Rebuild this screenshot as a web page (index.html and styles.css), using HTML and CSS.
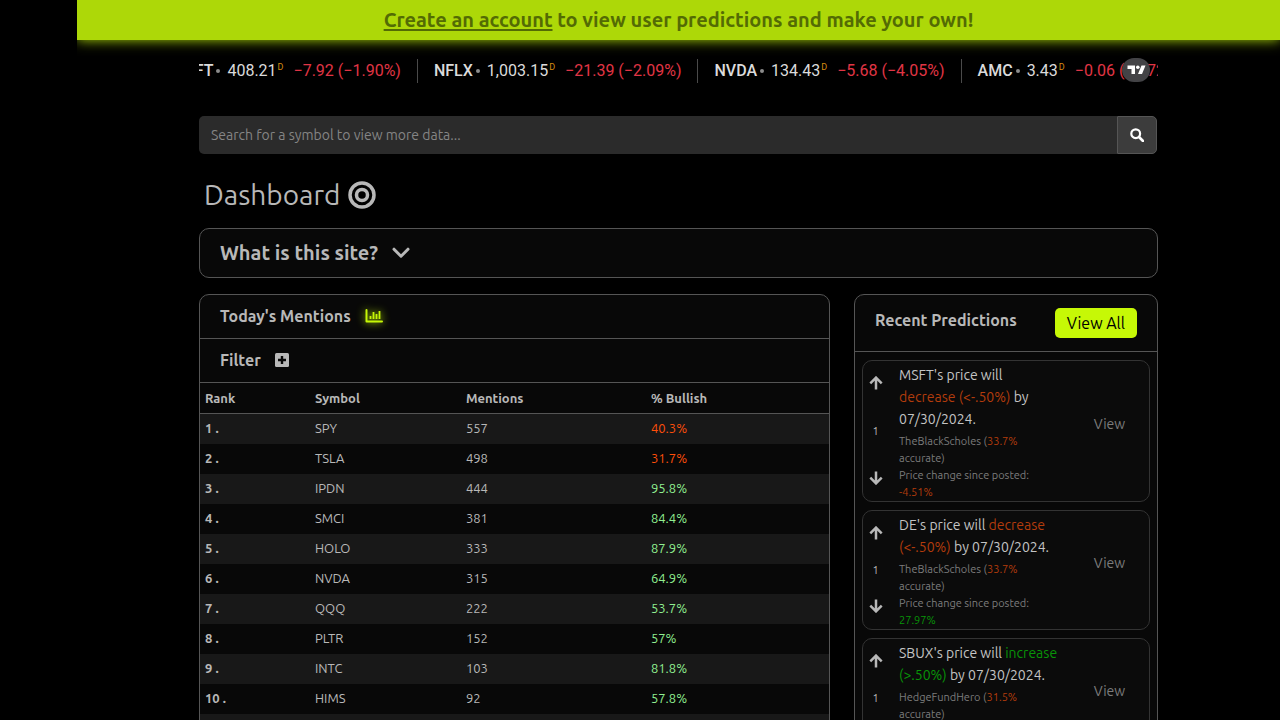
FILE: index.html
```html
<!DOCTYPE html>
<html lang="en">
<head>
<meta charset="utf-8">
<meta name="viewport" content="width=device-width, initial-scale=1">
<title>Dashboard</title>
<link rel="stylesheet" href="styles.css">
</head>
<body>
<svg class="sprite" aria-hidden="true">
  <symbol id="arrow-up" viewBox="0 0 14 14"><path d="M7 13.500V2M1.300 7.300 7 1.600l5.700 5.700" fill="none" stroke="currentColor" stroke-width="2.500"/></symbol>
  <symbol id="arrow-down" viewBox="0 0 14 14"><path d="M7 .5V12M1.300 6.700 7 12.400l5.700-5.700" fill="none" stroke="currentColor" stroke-width="2.500"/></symbol>
</svg>
<aside class="sidebar"></aside>
<div class="page">
  <div class="banner"><a href="#">Create an account</a> to view user predictions and make your own!</div>
  <main class="container">
    <div class="ticker">
      <ul class="ticker-track">
        <li class="quote"><b>MSFT</b><i></i><span>408.21</span><sup>D</sup><em>−7.92 (−1.90%)</em></li>
        <li class="quote"><b>NFLX</b><i></i><span>1,003.15</span><sup>D</sup><em>−21.39 (−2.09%)</em></li>
        <li class="quote"><b>NVDA</b><i></i><span>134.43</span><sup>D</sup><em>−5.68 (−4.05%)</em></li>
        <li class="quote"><b>AMC</b><i></i><span>3.43</span><sup>D</sup><em>−0.06 (−1.72%)</em></li>
      </ul>
      <a class="ticker-logo" href="#" aria-label="Ticker provider"><svg viewBox="0 0 28 24" width="28" height="24"><path d="M5.500 7.500H13v8.500H9.500v-5h-4zM20 16h-4l3.500-8.500H23.500z" fill="#fff"/><circle cx="15.800" cy="9.300" r="1.800" fill="#fff"/></svg></a>
    </div>
    <form class="search">
      <input type="text" aria-label="Search for a symbol" placeholder="Search for a symbol to view more data...">
      <button type="button" aria-label="Search"><svg viewBox="0 0 14 14" width="14" height="14"><circle cx="5.700" cy="5.700" r="4.400" fill="none" stroke="#fff" stroke-width="2.200"/><path d="m9 9 4 4" stroke="#fff" stroke-width="2.600" stroke-linecap="round"/></svg></button>
    </form>
    <h1>Dashboard <svg viewBox="0 0 28 28" width="28" height="28" fill="none" stroke="currentColor" stroke-width="3.500"><circle cx="14" cy="14" r="12"/><circle cx="14" cy="14" r="5.500"/></svg></h1>
    <button class="about" type="button">What is this site? <svg viewBox="0 0 18 12" width="18" height="12"><path d="m2 2.200 7 7 7-7" fill="none" stroke="currentColor" stroke-width="3" stroke-linecap="round" stroke-linejoin="round"/></svg></button>
    <div class="columns">
      <section class="card">
        <h2 class="card-head">Today's Mentions <svg class="chart" viewBox="0 0 18 14" width="18" height="14" fill="none" stroke="currentColor"><path d="M1.500 1v11.500H17" stroke-width="2" stroke-linecap="round" stroke-linejoin="round"/><path d="M5.500 7v3M8.500 3v7M11.500 5v5M14.500 2v8" stroke-width="1.800"/></svg></h2>
        <button class="card-head filter" type="button">Filter <svg viewBox="0 0 14 14" width="14" height="14"><rect width="14" height="14" rx="1.500" fill="currentColor"/><path d="M7 3v8M3 7h8" stroke="#080808" stroke-width="2.400"/></svg></button>
        <table>
          <colgroup><col class="c-rank"><col class="c-symbol"><col class="c-mentions"><col></colgroup>
          <thead><tr><th>Rank</th><th>Symbol</th><th>Mentions</th><th>% Bullish</th></tr></thead>
          <tbody>
            <tr><th>1 .</th><td>SPY</td><td>557</td><td class="bear">40.3%</td></tr>
            <tr><th>2 .</th><td>TSLA</td><td>498</td><td class="bear">31.7%</td></tr>
            <tr><th>3 .</th><td>IPDN</td><td>444</td><td class="bull">95.8%</td></tr>
            <tr><th>4 .</th><td>SMCI</td><td>381</td><td class="bull">84.4%</td></tr>
            <tr><th>5 .</th><td>HOLO</td><td>333</td><td class="bull">87.9%</td></tr>
            <tr><th>6 .</th><td>NVDA</td><td>315</td><td class="bull">64.9%</td></tr>
            <tr><th>7 .</th><td>QQQ</td><td>222</td><td class="bull">53.7%</td></tr>
            <tr><th>8 .</th><td>PLTR</td><td>152</td><td class="bull">57%</td></tr>
            <tr><th>9 .</th><td>INTC</td><td>103</td><td class="bull">81.8%</td></tr>
            <tr><th>10 .</th><td>HIMS</td><td>92</td><td class="bull">57.8%</td></tr>
            <tr><th></th><td></td><td></td><td></td></tr>
          </tbody>
        </table>
      </section>
      <section class="card">
        <div class="predictions-head"><h2>Recent Predictions</h2><button type="button">View All</button></div>
        <div class="predictions">
          <article class="prediction">
            <div class="votes"><button type="button" aria-label="Vote up"><svg><use href="#arrow-up"/></svg></button><span>1</span><button type="button" aria-label="Vote down"><svg><use href="#arrow-down"/></svg></button></div>
            <div class="body"><p class="claim">MSFT's price will <span class="down">decrease (&lt;-.50%)</span> by 07/30/2024.</p><p class="meta">TheBlackScholes (<span class="down">33.7%</span> accurate)</p><p class="meta">Price change since posted: <span class="down">-4.51%</span></p></div>
            <a class="view" href="#">View</a>
          </article>
          <article class="prediction">
            <div class="votes"><button type="button" aria-label="Vote up"><svg><use href="#arrow-up"/></svg></button><span>1</span><button type="button" aria-label="Vote down"><svg><use href="#arrow-down"/></svg></button></div>
            <div class="body"><p class="claim">DE's price will <span class="down">decrease (&lt;-.50%)</span> by 07/30/2024.</p><p class="meta">TheBlackScholes (<span class="down">33.7%</span> accurate)</p><p class="meta">Price change since posted: <span class="up">27.97%</span></p></div>
            <a class="view" href="#">View</a>
          </article>
          <article class="prediction">
            <div class="votes"><button type="button" aria-label="Vote up"><svg><use href="#arrow-up"/></svg></button><span>1</span><button type="button" aria-label="Vote down"><svg><use href="#arrow-down"/></svg></button></div>
            <div class="body"><p class="claim">SBUX's price will <span class="up">increase (&gt;.50%)</span> by 07/30/2024.</p><p class="meta">HedgeFundHero (<span class="down">31.5%</span> accurate)</p></div>
            <a class="view" href="#">View</a>
          </article>
        </div>
      </section>
    </div>
  </main>
</div>
</body>
</html>
```
FILE: styles.css
```css
* { box-sizing: border-box; }
html { background: #000; scrollbar-width: none; }
body {
  display: flex;
  min-height: 100vh;
  margin: 0;
  color: #b8b8b8;
  font: 14px/22px Ubuntu, "Noto Sans", sans-serif;
}
h1, h2, p, ul { margin: 0; padding: 0; }
button { font: inherit; color: inherit; cursor: pointer; }
.sprite { display: none; }
.sidebar { flex: 0 0 77px; }
.page { flex: 1; min-width: 0; }
.banner {
  padding: 5px 0;
  background: #add808;
  box-shadow: 0 0 12px #add808;
  clip-path: inset(0 0 -16px 0);
  color: #536b04;
  font-size: 20px;
  font-weight: 700;
  line-height: 30px;
  text-align: center;
}
.banner a { color: inherit; text-decoration-thickness: 2px; text-underline-offset: 2px; }
.container { max-width: 959px; margin: 0 auto; }

.ticker { position: relative; margin-top: 8px; overflow: hidden; }
.ticker-track { display: flex; margin-left: -28px; list-style: none; }
.quote {
  display: flex;
  flex: none;
  align-items: center;
  height: 46px;
  padding-right: 16px;
  color: #dbdbdb;
  font: 16px/24px Roboto, sans-serif;
}
.quote + .quote::before { content: ""; height: 24px; margin-right: 16px; border-left: 1px solid #4a4a4a; }
.quote b { font-weight: 500; }
.quote i { width: 4px; height: 4px; margin: 0 7px 0 3px; border-radius: 50%; background: #8c8c8c; }
.quote sup { align-self: flex-start; margin: 11px 10px 0 1px; color: #d68a10; font-size: 9px; line-height: 16px; }
.quote em { color: #e03545; font-style: normal; }
.ticker-logo {
  position: absolute;
  top: 10px;
  right: 8px;
  display: flex;
  border-radius: 12px;
  background: #434346;
}

.search { display: flex; margin: 22px 1px 0 0; }
.search input {
  flex: 1;
  min-width: 0;
  height: 38px;
  padding: 0 12px;
  border: 0;
  border-radius: 5px 0 0 5px;
  background: #2b2b2b;
  color: #ddd;
  font: inherit;
}
.search input::placeholder { color: #858585; opacity: 1; }
.search button {
  display: flex;
  align-items: center;
  justify-content: center;
  width: 40px;
  padding: 0;
  border: 1px solid #555;
  border-radius: 0 5px 5px 0;
  background: #3c3c3c;
}
h1 {
  display: flex;
  align-items: center;
  gap: 8px;
  margin: 21px 5px 14px;
  font-size: 28px;
  font-weight: 400;
  line-height: 39px;
}
.about {
  display: flex;
  align-items: center;
  gap: 14px;
  width: 100%;
  height: 50px;
  padding: 0 20px;
  border: 1px solid #555;
  border-radius: 10px;
  background: #080808;
  font-size: 20px;
  font-weight: 700;
}
.columns { display: grid; grid-template-columns: 631fr 304fr; gap: 24px; margin-top: 16px; }
.card { min-width: 0; border: 1px solid #555; border-radius: 10px; background: #080808; overflow: hidden; }
.card-head {
  display: flex;
  align-items: center;
  gap: 14px;
  width: 100%;
  height: 44px;
  padding: 0 20px 1px;
  border: 0;
  border-bottom: 1px solid #555;
  background: none;
  font-size: 16px;
  font-weight: 700;
}
.chart { color: #c6f806; filter: drop-shadow(0 0 4px #c6f806); }
table { width: 100%; border-collapse: collapse; table-layout: fixed; font-size: 13px; line-height: 20px; }
.c-rank { width: 110px; }
.c-symbol { width: 24%; }
.c-mentions { width: 185px; }
th, td { height: 30px; padding: 4px 5px 6px; text-align: left; }
thead th { padding: 5px; border-bottom: 1px solid #555; }
tbody tr:nth-child(odd) { background: #181818; }
.bear { color: #ff4f0a; }
.bull { color: #90ee90; }

.predictions-head {
  display: flex;
  align-items: center;
  justify-content: space-between;
  height: 57px;
  padding: 0 20px;
  border-bottom: 1px solid #555;
}
.predictions-head h2 { padding-bottom: 6px; font-size: 16px; font-weight: 700; }
.predictions-head button {
  padding: 3px 12px;
  border: 0;
  border-radius: 5px;
  background: #c6f806;
  color: #000;
  font-size: 16px;
  line-height: 24px;
}
.predictions { display: grid; gap: 8px; padding: 8px 7px; }
.prediction {
  display: grid;
  grid-template-columns: 25px 1fr 81px;
  min-height: 120px;
  border: 1px solid #333;
  border-radius: 10px;
  background: #0b0b0b;
}
.votes {
  display: flex;
  flex-direction: column;
  align-items: center;
  justify-content: space-between;
  padding: 15px 0 16px;
  font-size: 11px;
  line-height: 16px;
}
.votes button { display: flex; padding: 0; border: 0; background: none; }
.votes svg { width: 14px; height: 14px; }
.body { padding: 3px 6px 0 11px; }
.claim { margin-bottom: 3px; color: #c4c4c4; }
.meta { color: #7c7c7c; font-size: 11px; line-height: 17px; }
.down { color: #b33c0c; }
.up { color: #089408; }
.view { align-self: center; padding: 0 0 14px 2px; color: #7c7c7c; text-align: center; text-decoration: none; }
.view:hover { color: #b8b8b8; }
```
